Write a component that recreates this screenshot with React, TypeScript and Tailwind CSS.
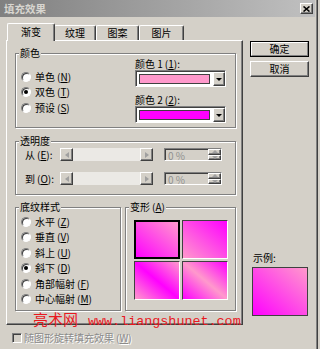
import React from "react";

const PINK = "#ff99cc";

const Key = ({ k }: { k: string }) => (
  <span className="ml-[2px]">
    (<span className="underline">{k}</span>)
  </span>
);

const Radio = ({ checked, label, k }: { checked?: boolean; label: string; k: string }) => (
  <div className="flex items-center h-[15.5px]">
    <span className="w-[10px] h-[10px] rounded-full bg-white border border-t-[#808080] border-l-[#808080] border-r-white border-b-white shadow-[inset_1px_1px_0_#404040] flex items-center justify-center">
      {checked && <span className="w-[4px] h-[4px] rounded-full bg-black" />}
    </span>
    <span className="ml-[4px]">
      {label}
      <Key k={k} />
    </span>
  </div>
);

const Group = ({
  title,
  className,
  children,
}: {
  title: React.ReactNode;
  className?: string;
  children?: React.ReactNode;
}) => (
  <fieldset
    className={`border border-[#808080] shadow-[inset_1px_1px_0_#fff,1px_1px_0_#fff] ${className ?? ""}`}
  >
    <legend className="ml-[3px] px-[1px] leading-[10px] bg-[#d4d0c8]">{title}</legend>
    {children}
  </fieldset>
);

const Arrow = ({ dir, color }: { dir: "left" | "right" | "up" | "down"; color: string }) => {
  const pts = {
    left: "4,0 0,3 4,6",
    right: "0,0 4,3 0,6",
    up: "0,3 3,0 6,3",
    down: "0,0 6,0 3,3",
  }[dir];
  const horiz = dir === "left" || dir === "right";
  return (
    <svg width={horiz ? 4 : 6} height={horiz ? 6 : 3} viewBox={horiz ? "0 0 4 6" : "0 0 6 3"}>
      <polygon points={pts} fill={color} />
    </svg>
  );
};

const raised =
  "border-t border-l border-t-white border-l-white border-r border-b border-r-[#404040] border-b-[#404040] shadow-[inset_-1px_-1px_0_#808080]";

const ArrowBtn = ({ dir }: { dir: "left" | "right" }) => (
  <div className={`w-[13px] h-[13px] bg-[#d4d0c8] flex items-center justify-center ${raised}`}>
    <Arrow dir={dir} color="#a0a0a0" />
  </div>
);

const Slider = () => (
  <div className="flex w-[93px] h-[13px]">
    <ArrowBtn dir="left" />
    <div className="flex-1 bg-[#ebe9e5]" />
    <ArrowBtn dir="right" />
  </div>
);

const Spin = () => (
  <div className="flex w-[58px] h-[13px] border-t border-l border-t-[#808080] border-l-[#808080] border-r border-b border-r-white border-b-white shadow-[inset_1px_1px_0_#404040]">
    <div className="flex-1 pl-[3px] pt-[1px] text-[#909090] leading-[11px]">0 %</div>
    <div className="flex flex-col w-[13px]">
      <div className={`flex-1 flex items-center justify-center bg-[#d4d0c8] ${raised}`}>
        <Arrow dir="up" color="#a0a0a0" />
      </div>
      <div className={`flex-1 flex items-center justify-center bg-[#d4d0c8] ${raised}`}>
        <Arrow dir="down" color="#a0a0a0" />
      </div>
    </div>
  </div>
);

const Combo = ({ color }: { color: string }) => (
  <div className="flex w-[91px] h-[17px] bg-white border-t border-l border-t-[#808080] border-l-[#808080] border-r border-b border-r-white border-b-white shadow-[inset_1px_1px_0_#404040]">
    <div className="flex-1 m-[2px] ml-[3px] mt-[3px] border border-[#404040]" style={{ background: color }} />
    <div className={`w-[12px] mt-[1px] ml-[1px] bg-[#d4d0c8] flex items-center justify-center ${raised}`}>
      <Arrow dir="down" color="#000" />
    </div>
  </div>
);

const Tab = ({ label, active, w }: { label: string; active?: boolean; w: string }) => (
  <div
    className={`${w} ${
      active ? "h-[18px] -mb-[1px] -mx-[1px] relative z-10 pb-[2px]" : "h-[15px]"
    } bg-[#d4d0c8] rounded-t-[2px] border-t border-l border-white border-r border-r-[#404040] shadow-[inset_-1px_0_0_#808080] flex items-center justify-center`}
  >
    {label}
  </div>
);

const tiles = [
  "bg-[linear-gradient(to_top_right,#ff00ff,#ff99cc)] border-2 border-black",
  "bg-[linear-gradient(to_top_right,#ff99cc,#ff00ff)] border border-t-[#404040] border-l-[#404040] border-r-white border-b-white",
  "bg-[linear-gradient(to_top_right,#ff99cc,#ff00ff,#ff99cc)] border border-t-[#404040] border-l-[#404040] border-r-white border-b-white",
  "bg-[linear-gradient(to_top_right,#ff00ff,#ff99cc,#ff00ff)] border border-t-[#404040] border-l-[#404040] border-r-white border-b-white",
];

export default function App() {
  return (
    <div className="w-[320px] h-[349px] overflow-hidden bg-[#d4d0c8] text-[10px] leading-[10px] text-black font-['Noto_Sans_CJK_SC',sans-serif]">
      <div className="w-[318px] h-full border-r border-r-[#404040] shadow-[inset_-1px_0_0_#808080]">
        {/* title bar */}
        <div className="h-[17px] mr-[2px] flex items-center bg-[linear-gradient(to_right,#808080,#c0c0c0)] pl-[4px] pr-[2px]">
          <span className="font-bold text-[10.5px] text-[#d8d6d0]">填充效果</span>
          <div className={`ml-auto w-[13px] h-[11px] bg-[#d4d0c8] flex items-center justify-center ${raised}`}>
            <svg width="7" height="6" viewBox="0 0 7 6">
              <path d="M0.5 0.5 L6.5 5.5 M6.5 0.5 L0.5 5.5" stroke="#000" strokeWidth="1.6" />
            </svg>
          </div>
        </div>

        <div className="flex pt-[6px] pl-[6px]">
          {/* left column */}
          <div className="w-[237px]">
            <div className="h-[17px] flex items-end pl-[2px]">
              <Tab label="渐变" active w="w-[48px]" />
              <Tab label="纹理" w="w-[42px]" />
              <Tab label="图案" w="w-[43px]" />
              <Tab label="图片" w="w-[45px]" />
            </div>
            <div className="relative h-[285px] border-t border-l border-white border-r border-b border-r-[#404040] border-b-[#404040] shadow-[inset_-1px_-1px_0_#808080] pl-[8px] pt-[7px]">
              <Group title="颜色" className="w-[221px] h-[80px]">
                <div className="flex">
                  <div className="w-[119px] pl-[5px] pt-[11px]">
                    <Radio label="单色" k="N" />
                    <Radio label="双色" k="T" checked />
                    <Radio label="预设" k="S" />
                  </div>
                  <div>
                    <div className="h-[11px] flex items-center">
                      颜色 1<Key k="1" />:
                    </div>
                    <div className="mt-[1px]">
                      <Combo color={PINK} />
                    </div>
                    <div className="h-[11px] mt-[7px] flex items-center">
                      颜色 2<Key k="2" />:
                    </div>
                    <div className="mt-[1px]">
                      <Combo color="#ff00ff" />
                    </div>
                  </div>
                </div>
              </Group>

              <Group title="透明度" className="w-[221px] h-[59px] mt-[8px]">
                <div className="pl-[9px] pt-[2px]">
                  {[
                    ["从", "E"],
                    ["到", "O"],
                  ].map(([t, k], i) => (
                    <div key={t} className={`flex items-center h-[13px] ${i ? "mt-[11px]" : ""}`}>
                      <span className="w-[35px]">
                        {t}
                        <Key k={k} />:
                      </span>
                      <Slider />
                      <div className="ml-[11px]">
                        <Spin />
                      </div>
                    </div>
                  ))}
                </div>
              </Group>

              <div className="flex mt-[7px]">
                <Group title="底纹样式" className="w-[106px] h-[109px]">
                  <div className="pl-[5px] pt-[2px]">
                    <Radio label="水平" k="Z" />
                    <Radio label="垂直" k="V" />
                    <Radio label="斜上" k="U" />
                    <Radio label="斜下" k="D" checked />
                    <Radio label="角部幅射" k="F" />
                    <Radio label="中心幅射" k="M" />
                  </div>
                </Group>
                <Group
                  title={
                    <>
                      变形<Key k="A" />
                    </>
                  }
                  className="w-[111px] h-[109px] ml-[4px]"
                >
                  <div className="grid grid-cols-[46px_46px] grid-rows-[39px_39px] gap-[2px] pl-[8px] pt-[8px]">
                    {tiles.map((c) => (
                      <div key={c} className={c} />
                    ))}
                  </div>
                </Group>
              </div>

              {/* watermark */}
              <div className="absolute left-[26px] top-[270px] flex items-baseline text-[#e8191f] whitespace-nowrap">
                <span className="text-[15px] leading-[16px] font-['Noto_Sans_CJK_SC',serif]">亮术网</span>
                <span className="ml-[10px] text-[13.4px] leading-[16px] font-['Liberation_Mono',monospace]">
                  www.liangshunet.com
                </span>
              </div>
            </div>

            <div className="flex items-center mt-[8px] pl-[6px] h-[10px]">
              <span className="w-[10px] h-[10px] bg-[#d4d0c8] border border-t-[#808080] border-l-[#808080] border-r-white border-b-white shadow-[inset_1px_1px_0_#404040]" />
              <span className="ml-[2px] text-[#8a8a8a] [text-shadow:1px_1px_0_#fff]">
                随图形旋转填充效果<Key k="W" />
              </span>
            </div>
          </div>

          {/* right column */}
          <div className="ml-[7px] pt-[18px]">
            <div className="w-[59px] h-[16px] border border-black">
              <div className="h-full border-t border-l border-white border-r border-b border-r-[#808080] border-b-[#808080] flex items-center justify-center">
                确定
              </div>
            </div>
            <div className={`w-[59px] h-[16px] mt-[4px] flex items-center justify-center ${raised}`}>取消</div>
            <div className="mt-[176px] pl-[3px] h-[10px]">示例:</div>
            <div className="mt-[4px] ml-[2px] w-[56px] h-[49px] border border-[#404040] bg-[linear-gradient(to_top_right,#ff00ff,#ff99cc)]" />
          </div>
        </div>
      </div>
    </div>
  );
}
